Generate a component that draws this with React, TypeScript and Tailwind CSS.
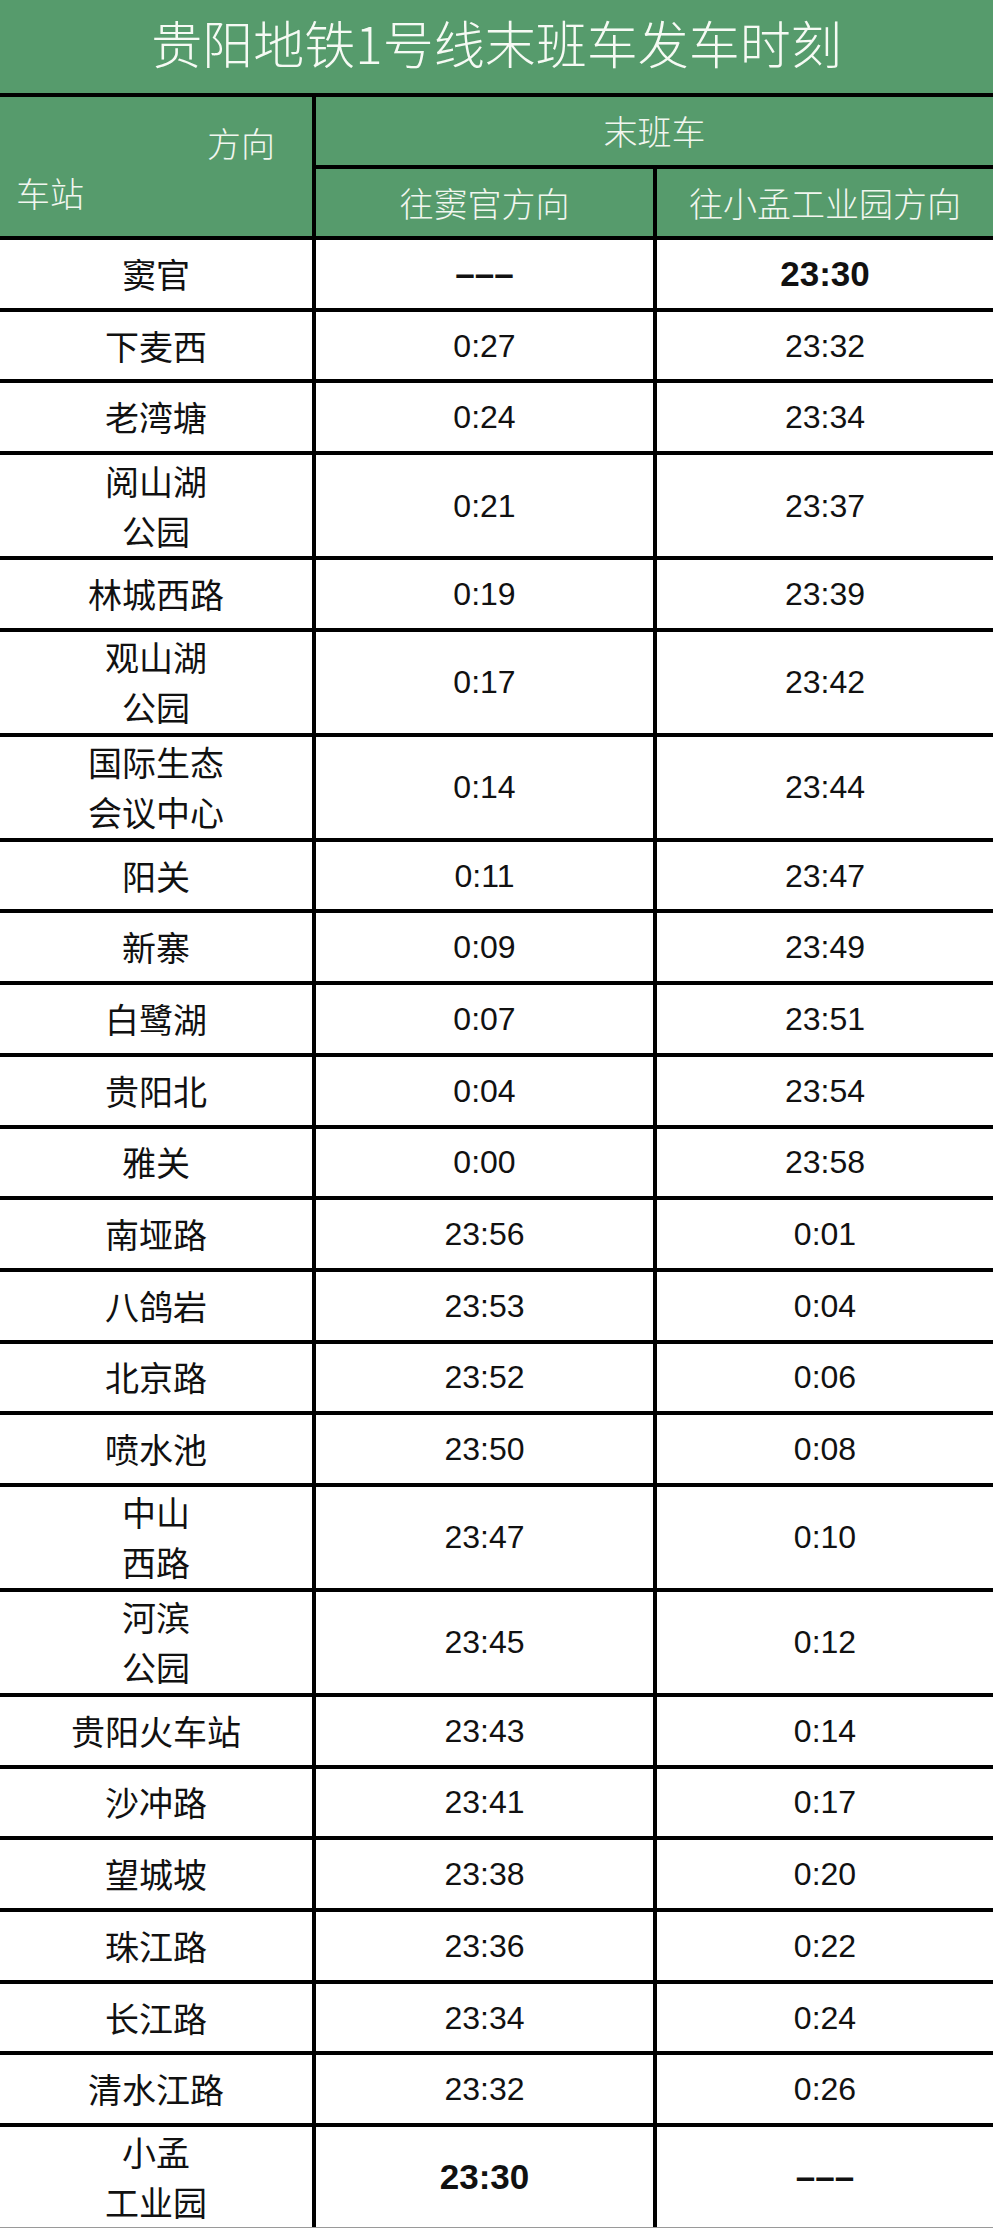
import React from "react";

const rows: { name: string[]; toDou: string; toXm: string; bold?: boolean }[] = [
  { name: ["窦官"], toDou: "–––", toXm: "23:30", bold: true },
  { name: ["下麦西"], toDou: "0:27", toXm: "23:32" },
  { name: ["老湾塘"], toDou: "0:24", toXm: "23:34" },
  { name: ["阅山湖", "公园"], toDou: "0:21", toXm: "23:37" },
  { name: ["林城西路"], toDou: "0:19", toXm: "23:39" },
  { name: ["观山湖", "公园"], toDou: "0:17", toXm: "23:42" },
  { name: ["国际生态", "会议中心"], toDou: "0:14", toXm: "23:44" },
  { name: ["阳关"], toDou: "0:11", toXm: "23:47" },
  { name: ["新寨"], toDou: "0:09", toXm: "23:49" },
  { name: ["白鹭湖"], toDou: "0:07", toXm: "23:51" },
  { name: ["贵阳北"], toDou: "0:04", toXm: "23:54" },
  { name: ["雅关"], toDou: "0:00", toXm: "23:58" },
  { name: ["南垭路"], toDou: "23:56", toXm: "0:01" },
  { name: ["八鸽岩"], toDou: "23:53", toXm: "0:04" },
  { name: ["北京路"], toDou: "23:52", toXm: "0:06" },
  { name: ["喷水池"], toDou: "23:50", toXm: "0:08" },
  { name: ["中山", "西路"], toDou: "23:47", toXm: "0:10" },
  { name: ["河滨", "公园"], toDou: "23:45", toXm: "0:12" },
  { name: ["贵阳火车站"], toDou: "23:43", toXm: "0:14" },
  { name: ["沙冲路"], toDou: "23:41", toXm: "0:17" },
  { name: ["望城坡"], toDou: "23:38", toXm: "0:20" },
  { name: ["珠江路"], toDou: "23:36", toXm: "0:22" },
  { name: ["长江路"], toDou: "23:34", toXm: "0:24" },
  { name: ["清水江路"], toDou: "23:32", toXm: "0:26" },
  { name: ["小孟", "工业园"], toDou: "23:30", toXm: "–––", bold: true },
];

const cjk = "font-['Noto_Sans_CJK_SC',sans-serif]";
const num = "font-['Liberation_Sans','Noto_Sans_CJK_SC',sans-serif]";

function TimeCell({ value, bold, last }: { value: string; bold: boolean; last?: boolean }) {
  const isBoldVal = bold && (value === "23:30" || value === "–––");
  return (
    <div
      className={`flex items-center justify-center text-[#111] ${num} ${
        isBoldVal ? "text-[35px] font-bold" : "text-[32px]"
      } ${last ? "" : "border-r-4 border-black"}`}
    >
      {value}
    </div>
  );
}

export default function App() {
  return (
    <div className={`w-[993px] bg-white ${cjk}`}>
      <div className="h-[93px] bg-[#569b6c] flex items-center justify-center">
        <h1 className="text-[51px] leading-none text-[#f6faf4] font-light pb-[8px]">贵阳地铁1号线末班车发车时刻</h1>
      </div>

      <div className="grid grid-cols-[316px_1fr] h-[143px] bg-[#569b6c] border-t-4 border-black text-[#f1f6ef] text-[34px] leading-none font-light">
        <div className="flex flex-col border-r-4 border-black">
          <span className="self-end mr-[37px] mt-[29px]">方向</span>
          <span className="ml-[16px] mt-[16px]">车站</span>
        </div>
        <div className="flex flex-col">
          <div className="h-[72px] flex items-center justify-center border-b-4 border-black">末班车</div>
          <div className="flex-1 grid grid-cols-[341px_1fr]">
            <div className="flex items-center justify-center border-r-4 border-black">往窦官方向</div>
            <div className="flex items-center justify-center">往小孟工业园方向</div>
          </div>
        </div>
      </div>

      {rows.map((r, i) => {
        const double = r.name.length > 1;
        const last = i === rows.length - 1;
        return (
          <div
            key={r.name.join("")}
            className={`grid grid-cols-[316px_341px_1fr] border-t-4 border-black ${
              double ? "h-[105px]" : "h-[71.7px]"
            } ${last ? "border-b border-b-[#9a9a9a]" : ""}`}
          >
            <div className="flex flex-col items-center justify-center border-r-4 border-black text-[34px] leading-[50px] text-[#111]">
              {r.name.map((n) => (
                <span key={n}>{n}</span>
              ))}
            </div>
            <TimeCell value={r.toDou} bold={!!r.bold} />
            <TimeCell value={r.toXm} bold={!!r.bold} last />
          </div>
        );
      })}
    </div>
  );
}
